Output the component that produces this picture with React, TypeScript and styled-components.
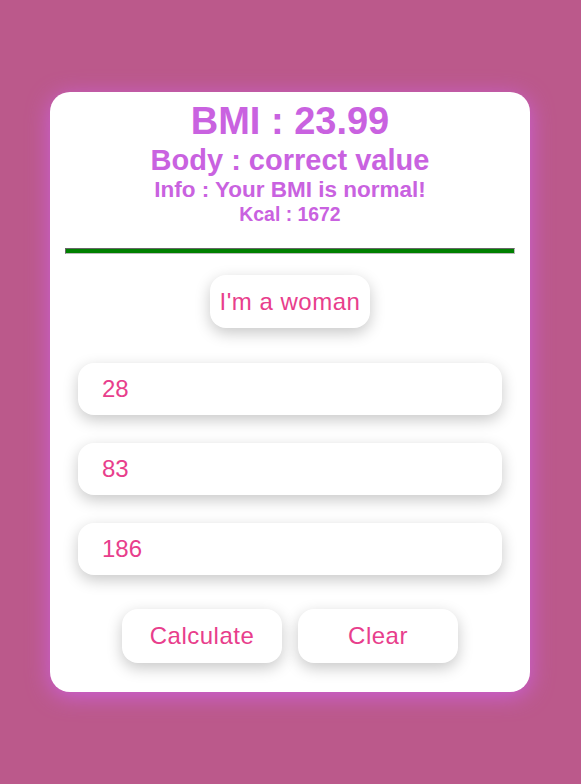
import React, { useState } from "react";
import styled, { createGlobalStyle } from "styled-components";

const Global = createGlobalStyle`
  html, body { margin: 0; padding: 0; }
  body {
    background: #bb598b;
    font-family: "Liberation Sans", Arial, sans-serif;
  }
`;

const Page = styled.div`
  min-height: 100vh;
  padding-right: 1px;
  display: flex;
  align-items: center;
  justify-content: center;
`;

const Card = styled.div`
  width: 480px;
  height: 600px;
  box-sizing: border-box;
  background: #fff;
  border-radius: 20px;
  padding: 8px 15px 0;
  box-shadow: 0 4px 22px #cc5fd8;
  display: flex;
  flex-direction: column;
  align-items: center;
`;

const Result = styled.div<{ $size: number }>`
  color: #c962e0;
  font-weight: bold;
  font-size: ${(p) => p.$size}px;
  line-height: 1.15;
  text-align: center;
`;

const Divider = styled.hr`
  align-self: stretch;
  height: 4px;
  background: green;
  border: 1px inset #bbb;
  margin: 23px 0 21px;
`;

const PillButton = styled.button<{ $w: number; $h: number }>`
  width: ${(p) => p.$w}px;
  height: ${(p) => p.$h}px;
  border: none;
  border-radius: 16px;
  background: #fff;
  color: #e83e8c;
  font-family: "Liberation Sans", Arial, sans-serif;
  font-size: 24px;
  letter-spacing: 0.5px;
  box-shadow: 0 5px 15px rgba(0, 0, 0, 0.22);
  cursor: pointer;
`;

const Inputs = styled.div`
  display: flex;
  flex-direction: column;
  gap: 28px;
  margin-top: 35px;
`;

const Field = styled.input`
  width: 424px;
  height: 52px;
  box-sizing: border-box;
  border: none;
  border-radius: 16px;
  padding: 0 24px;
  background: #fff;
  color: #e83e8c;
  font-family: "Liberation Sans", Arial, sans-serif;
  font-size: 24px;
  box-shadow: 0 5px 15px rgba(0, 0, 0, 0.22);
  outline: none;
`;

const Actions = styled.div`
  display: flex;
  gap: 16px;
  margin-top: 34px;
`;

export default function App() {
  const [age, setAge] = useState("28");
  const [weight, setWeight] = useState("83");
  const [height, setHeight] = useState("186");
  return (
    <Page>
      <Global />
      <Card>
        <Result $size={38}>BMI : 23.99</Result>
        <Result $size={29}>Body : correct value</Result>
        <Result $size={22.5}>Info : Your BMI is normal!</Result>
        <Result $size={19.4}>Kcal : 1672</Result>
        <Divider />
        <PillButton $w={160} $h={53}>I'm a woman</PillButton>
        <Inputs>
          <Field value={age} onChange={(e) => setAge(e.target.value)} />
          <Field value={weight} onChange={(e) => setWeight(e.target.value)} />
          <Field value={height} onChange={(e) => setHeight(e.target.value)} />
        </Inputs>
        <Actions>
          <PillButton $w={160} $h={54}>Calculate</PillButton>
          <PillButton $w={160} $h={54}>Clear</PillButton>
        </Actions>
      </Card>
    </Page>
  );
}
